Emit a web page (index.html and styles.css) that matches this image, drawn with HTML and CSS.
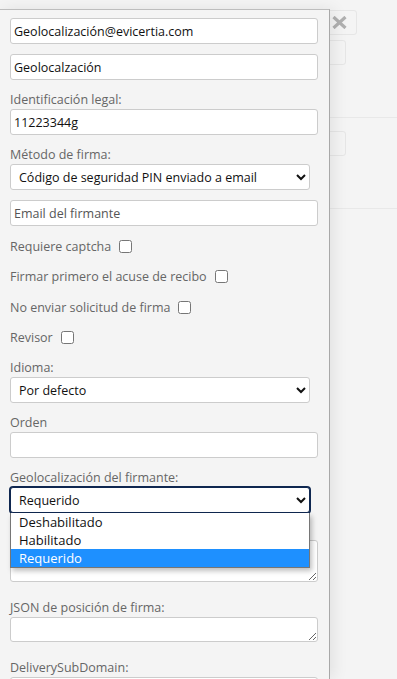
FILE: index.html
```html
<!DOCTYPE html>
<html lang="es">
  <head>
    <meta charset="UTF-8" />
    <meta name="viewport" content="width=device-width, initial-scale=1.0" />
    <title>Firmante</title>
    <link rel="stylesheet" href="styles.css">
  </head>
  <body>
    <div class="page">
      <div class="bg-top">
        <button type="button" class="bg-close" aria-label="Cerrar">
          <svg width="15" height="13" viewBox="0 0 15 13">
            <path d="M1.5 1 L13.5 12 M13.5 1 L1.5 12" stroke="#b0b0b0" stroke-width="3.2" fill="none" />
          </svg>
        </button>
      </div>
      <div class="bg-field"></div>
      <div class="bg-rule"></div>
      <div class="bg-field second"></div>
      <div class="bg-rule"></div>
    </div>

    <div class="panel">
      <div class="form-group">
        <input type="text" value="Geolocalización@evicertia.com" />
      </div>
      <div class="form-group">
        <input type="text" value="Geolocalzación" />
      </div>
      <div class="form-group">
        <label>Identificación legal:</label>
        <input type="text" value="11223344g" />
      </div>
      <div class="form-group">
        <label>Método de firma:</label>
        <select>
          <option>Código de seguridad PIN enviado a email</option>
        </select>
      </div>
      <div class="form-group">
        <input type="text" placeholder="Email del firmante" />
      </div>

      <div class="check-row">
        <span>Requiere captcha</span>
        <input type="checkbox" />
      </div>
      <div class="check-row">
        <span>Firmar primero el acuse de recibo</span>
        <input type="checkbox" />
      </div>
      <div class="check-row">
        <span>No enviar solicitud de firma</span>
        <input type="checkbox" />
      </div>
      <div class="check-row">
        <span>Revisor</span>
        <input type="checkbox" />
      </div>

      <div class="form-group">
        <label>Idioma:</label>
        <select>
          <option>Por defecto</option>
        </select>
      </div>
      <div class="form-group">
        <label>Orden</label>
        <input type="text" />
      </div>
      <div class="form-group geo">
        <label>Geolocalización del firmante:</label>
        <select class="focused">
          <option>Requerido</option>
        </select>
        <ul class="dropdown">
          <li>Deshabilitado</li>
          <li>Habilitado</li>
          <li class="active">Requerido</li>
        </ul>
      </div>
      <!-- label of this one is hidden under the open list -->
      <div class="form-group area">
        <label></label>
        <textarea class="tall"></textarea>
      </div>
      <div class="form-group area">
        <label>JSON de posición de firma:</label>
        <textarea></textarea>
      </div>
      <div class="form-group">
        <label>DeliverySubDomain:</label>
        <input type="text" />
      </div>
    </div>
  </body>
</html>
```

FILE: styles.css
```css
body {
  margin: 0;
  background-color: #f4f4f4;
  font-family: "Open Sans", "Noto Sans", sans-serif;
  font-size: 12.5px;
  color: #222;
  height: 679px;
  overflow: hidden;
  position: relative;
}

/* page behind the side panel */
.page {
  padding-top: 10px;
}

.bg-top {
  display: flex;
  justify-content: flex-end;
  padding-right: 40px;
}

.bg-close {
  display: flex;
  align-items: center;
  justify-content: flex-end;
  width: 40px;
  height: 25px;
  padding: 0 9px 0 0;
  border: 1px solid #e6e6e6;
  border-radius: 3px;
  background-color: #f4f4f4;
}

.bg-field {
  width: 346px;
  height: 25px;
  margin-top: 5px;
  border: 1px solid #e6e6e6;
  border-radius: 3px;
  box-sizing: border-box;
}

.bg-field.second {
  margin-top: 13px;
}

.bg-rule {
  margin-top: 52px;
  border-top: 1px solid #e8e8e8;
}

/* side panel */
.panel {
  position: absolute;
  top: 9px;
  left: 0;
  bottom: 0;
  width: 319px;
  padding: 8px 0 0 10px;
  background-color: #f4f4f4;
  border-top: 1px solid #bdbdbd;
  border-right: 1px solid #a8a8a8;
  box-shadow: 4px 0 14px rgba(0, 0, 0, 0.08);
}

.form-group {
  margin-bottom: 10px;
}

.form-group label {
  display: block;
  height: 19px;
  line-height: 19px;
  color: #666;
}

.form-group input,
.form-group textarea {
  display: block;
  width: 308px;
  height: 26px;
  box-sizing: border-box;
  padding: 0 3px;
  border: 1px solid #cccccc;
  border-radius: 3px;
  background-color: #fff;
  font-family: inherit;
  font-size: 12.5px;
  color: #111;
}

.form-group input::placeholder {
  color: #555;
}

.form-group textarea {
  height: 25px;
  resize: vertical;
}

.form-group textarea.tall {
  height: 42px;
}

.form-group.area {
  margin-bottom: 16px;
}

.form-group select {
  display: block;
  width: 300px;
  height: 26px;
  padding: 0 4px;
  border: 1px solid #cccccc;
  border-radius: 3px;
  background-color: #fff;
  font-family: inherit;
  font-size: 12.5px;
  color: #111;
}

.form-group select.focused {
  border-color: #0f2750;
  box-shadow: 0 0 0 1px #0f2750;
}

.check-row {
  display: flex;
  align-items: center;
  height: 20px;
  margin-bottom: 10.5px;
  color: #666;
}

.check-row input {
  width: 13px;
  height: 13px;
  margin: 0 0 0 8px;
}

.geo {
  position: relative;
  margin-bottom: 8px;
}

.dropdown {
  position: absolute;
  top: 45px;
  left: 0;
  width: 298px;
  margin: 0;
  padding: 0;
  list-style: none;
  background-color: #fff;
  border: 1px solid #767676;
  border-top: none;
  box-shadow: 2px 3px 5px rgba(0, 0, 0, 0.25);
  z-index: 2;
}

.dropdown li {
  height: 18px;
  line-height: 18px;
  padding-left: 8px;
  font-size: 13px;
  color: #111;
}

.dropdown li.active {
  background-color: #1e90ff;
  color: #fff;
}
```
